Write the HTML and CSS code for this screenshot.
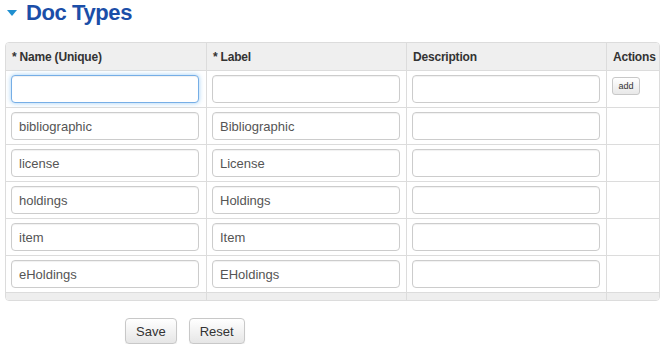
FILE: index.html
```html
<!DOCTYPE html>
<html>
<head>
<meta charset="utf-8">
<link rel="stylesheet" href="styles.css">
</head>
<body>
<div class="page">
  <h2 class="title"><span class="caret"></span>Doc Types</h2>
  <div class="grid-wrap">
    <table class="grid">
      <colgroup>
        <col class="c1"><col class="c2"><col class="c3"><col class="c4">
      </colgroup>
      <thead>
        <tr><th>* Name (Unique)</th><th>* Label</th><th>Description</th><th>Actions</th></tr>
      </thead>
      <tbody>
        <tr><td><input class="field focus" value=""></td><td><input class="field" value=""></td><td><input class="field" value=""></td><td class="act"><button class="btn-sm">add</button></td></tr>
        <tr><td><input class="field" value="bibliographic"></td><td><input class="field" value="Bibliographic"></td><td><input class="field" value=""></td><td></td></tr>
        <tr><td><input class="field" value="license"></td><td><input class="field" value="License"></td><td><input class="field" value=""></td><td></td></tr>
        <tr><td><input class="field" value="holdings"></td><td><input class="field" value="Holdings"></td><td><input class="field" value=""></td><td></td></tr>
        <tr><td><input class="field" value="item"></td><td><input class="field" value="Item"></td><td><input class="field" value=""></td><td></td></tr>
        <tr><td><input class="field" value="eHoldings"></td><td><input class="field" value="EHoldings"></td><td><input class="field" value=""></td><td></td></tr>
        <tr class="foot"><td></td><td></td><td></td><td></td></tr>
      </tbody>
    </table>
  </div>
  <div class="buttons">
    <button class="btn">Save</button>
    <button class="btn">Reset</button>
  </div>
</div>
</body>
</html>
```
FILE: styles.css
```css
html, body { margin: 0; padding: 0; background: #fff; }
body { font-family: "Liberation Sans", Arial, sans-serif; color: #333; }
.page { padding: 0 11px 0 5px; }
.title {
  margin: 0; height: 26px; padding-top: 0;
  font-size: 22px; font-weight: bold; color: #1b4ea8; line-height: 24px;
  letter-spacing: -0.4px;
  display: flex; align-items: center;
}
.caret {
  display: inline-block; width: 0; height: 0; margin: 0 9px 0 2px;
  border-left: 5px solid transparent; border-right: 5px solid transparent;
  border-top: 6px solid #1f8fd0;
}
.grid-wrap { margin-top: 16px; width: 654px; }
.grid {
  width: 654px; border-collapse: separate; border-spacing: 0; table-layout: fixed;
  border: 1px solid #dcdcdc; border-radius: 4px; overflow: hidden;
}
.c1, .c2, .c3 { width: 200px; }
.c4 { width: 53px; }
.grid th {
  background: #efefef; text-align: left; font-size: 12px; font-weight: bold; color: #333;
  height: 28px; padding: 0 0 0 6px; box-sizing: border-box; vertical-align: middle;
  border-left: 1px solid #dcdcdc; border-bottom: 1px solid #dcdcdc;
  white-space: nowrap; letter-spacing: -0.2px;
}
.grid th:first-child, .grid td:first-child { border-left: none; }
.grid td {
  box-sizing: border-box; height: 37px;
  padding: 4px 5px; border-left: 1px solid #dcdcdc; border-bottom: 1px solid #dcdcdc;
  vertical-align: middle; font-size: 0; line-height: 0;
}
.grid tr.foot td { background: #eeeeee; height: 7px; padding: 0; border-bottom: none; }
.grid td.act { vertical-align: top; padding: 6px 5px 0; }
.field {
  display: block; width: 188px; height: 28px; box-sizing: border-box; margin: 0;
  border: 1px solid #cccccc; border-radius: 4px; padding: 0 7px;
  font-family: "Liberation Sans", Arial, sans-serif; font-size: 13px; line-height: 16px; color: #555;
  box-shadow: inset 0 1px 1px rgba(0,0,0,0.06); background: #fff; outline: none;
}
.field.focus {
  border-color: #76aee6;
  box-shadow: inset 0 1px 1px rgba(0,0,0,0.06), 0 0 5px rgba(82,168,236,0.55);
}
.btn-sm {
  display: block; height: 18px; width: 28px; padding: 0; margin: 0;
  font-family: "Liberation Sans", Arial, sans-serif; font-size: 9px; line-height: 16px; color: #333;
  border: 1px solid #c8c8c8; border-radius: 3px;
  background: linear-gradient(#ffffff, #e8e8e8);
}
.buttons { display: flex; gap: 12px; padding: 17px 0 0 120px; }
.btn {
  height: 26px; padding: 0 10px; margin: 0;
  font-family: "Liberation Sans", Arial, sans-serif; font-size: 13px; color: #333;
  border: 1px solid #c8c8c8; border-radius: 4px;
  background: linear-gradient(#ffffff, #e6e6e6);
  box-shadow: 0 1px 1px rgba(0,0,0,0.08);
}
```
